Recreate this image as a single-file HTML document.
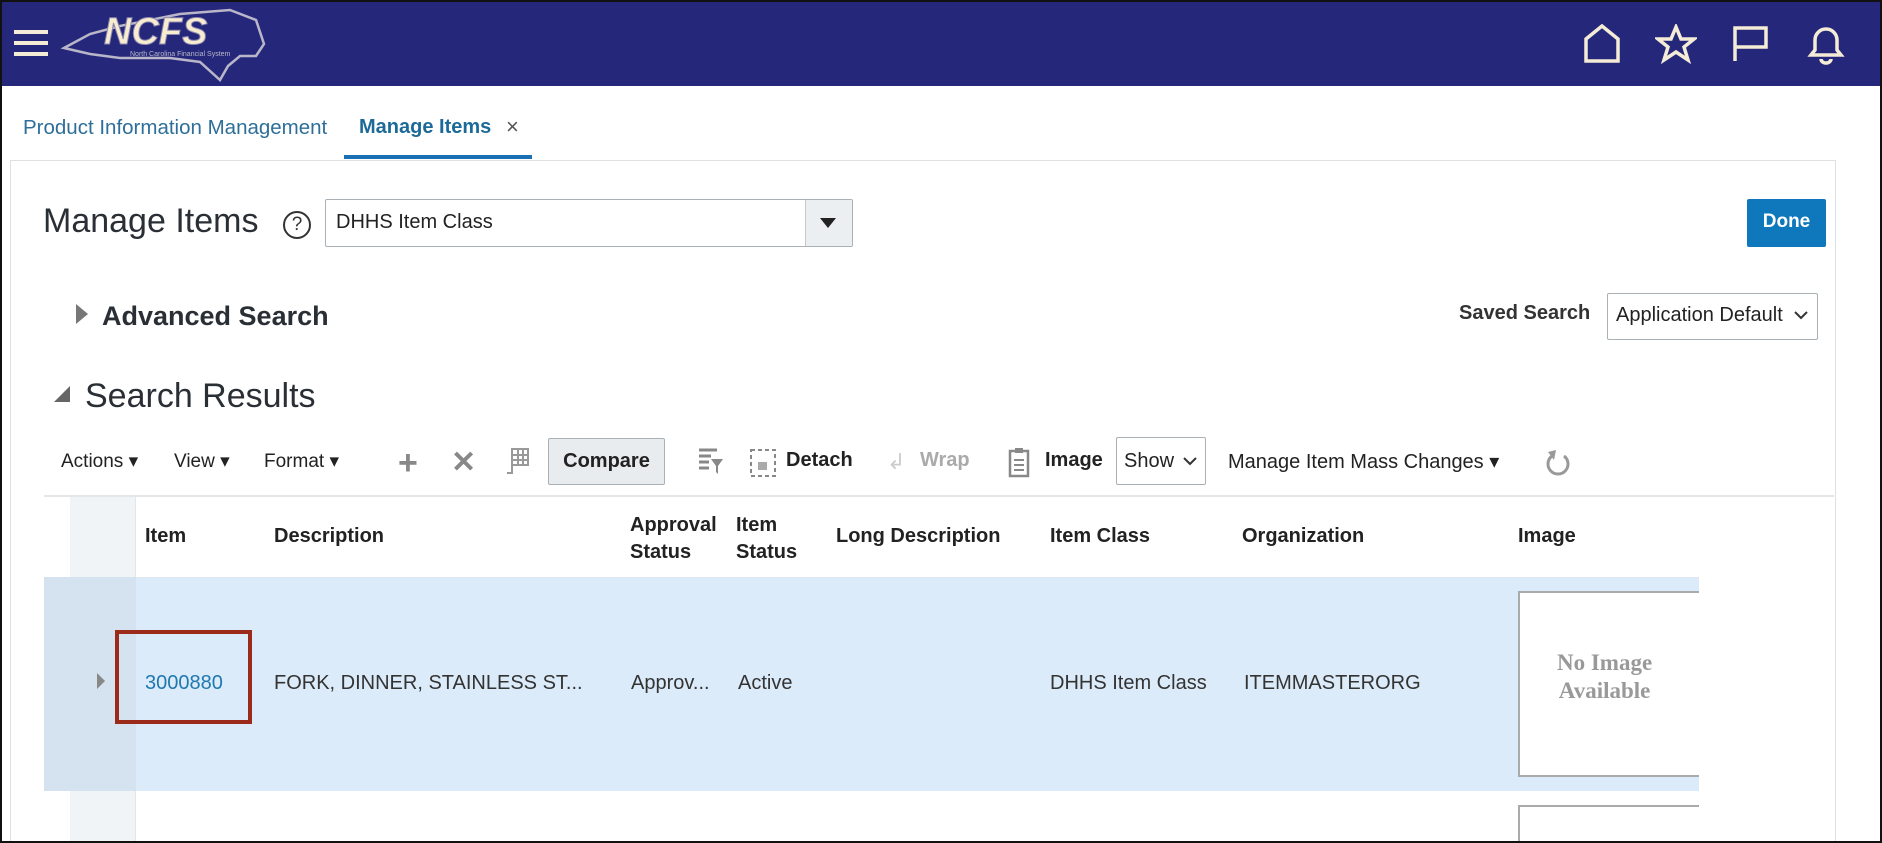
<!DOCTYPE html>
<html style="width:1882px;height:843px;overflow:hidden"><head><meta charset="utf-8"><style>
*{box-sizing:border-box;margin:0;padding:0}
body{width:1882px;height:843px;overflow:hidden;background:#fff;font-family:"Liberation Sans",Arial,sans-serif;position:relative;color:#333}
.a{position:absolute;white-space:nowrap}
#frame{position:absolute;left:0;top:0;width:1882px;height:843px;border:2px solid #111;z-index:50;pointer-events:none}
#hdr{position:absolute;left:0;top:0;width:1882px;height:86px;background:#25287a}
.ic{stroke:#f5ecd8;fill:none;stroke-width:3.5}
.th{font-weight:bold;font-size:20px;color:#222}
.td{font-size:20px;color:#333}
.tb{font-size:19px;color:#222}
</style></head><body>
<div id="frame"></div>
<div id="hdr">
 <div class="a" style="left:14px;top:30px;width:34px;height:4px;background:#f5ecd8"></div>
 <div class="a" style="left:14px;top:41px;width:34px;height:4px;background:#f5ecd8"></div>
 <div class="a" style="left:14px;top:52px;width:34px;height:4px;background:#f5ecd8"></div>
 <svg class="a" style="left:60px;top:4px" width="210" height="80" viewBox="0 0 210 80">
  <path d="M4 44 L30 30 L60 22 L120 10 L170 6 L196 16 L204 40 L196 52 L180 52 L168 62 L160 76 L140 58 L110 54 L60 54 L30 50 Z" fill="none" stroke="#b9b6c9" stroke-width="2.5"/>
  <text x="44" y="40" font-family="Liberation Sans" font-weight="bold" font-style="italic" font-size="38" fill="#f7ecd0" stroke="#8e8ab0" stroke-width="1">NCFS</text>
  <text x="70" y="52" font-family="Liberation Sans" font-size="7" fill="#b9b6c9">North Carolina Financial System</text>
 </svg>
 <svg class="a" style="left:1583px;top:24px" width="40" height="40"><path class="ic" d="M3 37 V15 L19 2 L35 15 V37 Z"/></svg>
 <svg class="a" style="left:1655px;top:24px" width="42" height="40"><path class="ic" d="M21 3 L26 15 L39 15 L29 23 L33 36 L21 28 L9 36 L13 23 L3 15 L16 15 Z"/></svg>
 <svg class="a" style="left:1732px;top:25px" width="40" height="40"><path class="ic" d="M3 36 V3 H34 V22 H3"/></svg>
 <svg class="a" style="left:1806px;top:24px" width="40" height="42"><path class="ic" d="M5 31 H35 L31 26 V16 A11 11 0 0 0 9 16 V26 Z M15 35 A5 4 0 0 0 25 35"/></svg>
</div>
<div class="a" style="left:23px;top:116px;font-size:20.5px;color:#2d6f99">Product Information Management</div>
<div class="a" style="left:359px;top:116px;font-size:20px;font-weight:bold;color:#1d6a99">Manage Items</div>
<div class="a" style="left:506px;top:114px;font-size:22px;color:#555">×</div>
<div class="a" style="left:344px;top:155px;width:188px;height:4px;background:#1b6fb3"></div>
<div class="a" style="left:10px;top:160px;width:1826px;height:683px;border:1px solid #dde1e4;border-bottom:none"></div>
<div class="a" style="left:43px;top:202px;font-size:34px;color:#2a2f36">Manage Items</div>
<div class="a" style="left:283px;top:211px;width:28px;height:28px;border:2px solid #333;border-radius:50%;text-align:center;font-size:19px;line-height:24px;color:#333">?</div>
<div class="a" style="left:325px;top:199px;width:528px;height:48px;border:1px solid #a9b0b6;border-radius:2px"></div>
<div class="a" style="left:336px;top:211px;font-size:20px;color:#222">DHHS Item Class</div>
<div class="a" style="left:805px;top:200px;width:47px;height:46px;background:#eceff1;border-left:1px solid #c5cacd"></div>
<div class="a" style="left:820px;top:218px;width:0;height:0;border-left:8px solid transparent;border-right:8px solid transparent;border-top:10px solid #222"></div>
<div class="a" style="left:1747px;top:199px;width:79px;height:48px;background:#0f78bc;border-radius:2px;color:#fff;font-weight:bold;font-size:19px;text-align:center;line-height:46px">Done</div>
<div class="a" style="left:76px;top:304px;width:0;height:0;border-top:10px solid transparent;border-bottom:10px solid transparent;border-left:12px solid #777"></div>
<div class="a" style="left:102px;top:301px;font-size:27px;font-weight:bold;color:#2a2f36">Advanced Search</div>
<div class="a" style="left:1459px;top:302px;font-size:20px;font-weight:bold;color:#333">Saved Search</div>
<div class="a" style="left:1607px;top:293px;width:211px;height:47px;border:1px solid #a9b0b6;border-radius:2px"></div>
<div class="a" style="left:1616px;top:304px;font-size:20px;color:#222">Application Default</div>
<svg class="a" style="left:1794px;top:310px" width="14" height="10"><path d="M1 2 L7 8 L13 2" stroke="#333" stroke-width="2" fill="none"/></svg>
<div class="a" style="left:54px;top:386px;width:0;height:0;border-left:16px solid transparent;border-bottom:16px solid #666"></div>
<div class="a" style="left:85px;top:377px;font-size:34px;color:#2a2f36">Search Results</div>
<div class="a tb" style="left:61px;top:450px">Actions ▾</div>
<div class="a tb" style="left:174px;top:450px">View ▾</div>
<div class="a tb" style="left:264px;top:450px">Format ▾</div>
<div class="a" style="left:398px;top:444px;font-size:34px;font-weight:bold;color:#888">+</div>
<div class="a" style="left:451px;top:445px;font-size:30px;font-weight:bold;color:#888">✕</div>
<svg class="a" style="left:504px;top:447px" width="26" height="30"><rect x="8" y="2" width="16" height="16" fill="none" stroke="#999" stroke-width="2"/><path d="M8 8 H24 M8 13 H24 M14 2 V18 M19 2 V18 M8 18 V26 H3" stroke="#999" stroke-width="2" fill="none"/></svg>
<div class="a" style="left:548px;top:438px;width:117px;height:47px;background:#e9ecee;border:1px solid #a9b0b6;border-radius:2px;font-weight:bold;font-size:20px;text-align:center;line-height:45px;color:#222">Compare</div>
<svg class="a" style="left:697px;top:447px" width="28" height="30"><path d="M2 3 H20 M2 9 H14 M2 15 H12 M2 21 H12" stroke="#888" stroke-width="3"/><path d="M14 12 H26 L21 19 V27 L19 25 V19 Z" fill="#888"/></svg>
<svg class="a" style="left:749px;top:448px" width="28" height="30"><rect x="2" y="2" width="24" height="26" fill="none" stroke="#888" stroke-width="2" stroke-dasharray="4 3"/><rect x="9" y="14" width="9" height="8" fill="#aaa"/></svg>
<div class="a tb" style="left:786px;top:449px;font-weight:bold;font-size:20px">Detach</div>
<div class="a" style="left:887px;top:449px;font-size:22px;color:#ccc">↲</div>
<div class="a tb" style="left:920px;top:449px;color:#aaa;font-weight:bold;font-size:20px">Wrap</div>
<svg class="a" style="left:1007px;top:446px" width="24" height="32"><rect x="3" y="5" width="18" height="25" fill="none" stroke="#888" stroke-width="2.5"/><rect x="8" y="2" width="8" height="5" fill="#888"/><path d="M7 14 H17 M7 19 H17 M7 24 H17" stroke="#888" stroke-width="2"/></svg>
<div class="a tb" style="left:1045px;top:449px;font-weight:bold;font-size:20px">Image</div>
<div class="a" style="left:1116px;top:437px;width:90px;height:48px;border:1px solid #a9b0b6;border-radius:2px"></div>
<div class="a tb" style="left:1124px;top:450px;font-size:20px">Show</div>
<svg class="a" style="left:1183px;top:456px" width="14" height="10"><path d="M1 2 L7 8 L13 2" stroke="#333" stroke-width="2" fill="none"/></svg>
<div class="a tb" style="left:1228px;top:449px;font-size:20px">Manage Item Mass Changes ▾</div>
<svg class="a" style="left:1544px;top:448px" width="28" height="30"><path d="M8 8 A10 10 0 1 0 20 8" stroke="#999" stroke-width="3" fill="none"/><path d="M4 4 L12 2 L10 12 Z" fill="#999"/></svg>
<div class="a" style="left:44px;top:495px;width:1790px;height:2px;background:#e4e7ea"></div>
<div class="a" style="left:70px;top:497px;width:66px;height:346px;background:#f1f4f6;border-right:1px solid #e3e7ea"></div>
<div class="a th" style="left:145px;top:525px">Item</div>
<div class="a th" style="left:274px;top:525px">Description</div>
<div class="a th" style="left:630px;top:512px;line-height:27px">Approval<br>Status</div>
<div class="a th" style="left:736px;top:512px;line-height:27px">Item<br>Status</div>
<div class="a th" style="left:836px;top:525px">Long Description</div>
<div class="a th" style="left:1050px;top:525px">Item Class</div>
<div class="a th" style="left:1242px;top:525px">Organization</div>
<div class="a th" style="left:1518px;top:525px">Image</div>
<div class="a" style="left:44px;top:577px;width:1655px;height:214px;background:#dbebf9;border-top:1px solid #e0e8ee"></div>
<div class="a" style="left:44px;top:577px;width:92px;height:214px;background:#d4e3ef"></div>
<div class="a" style="left:97px;top:673px;width:0;height:0;border-top:8px solid transparent;border-bottom:8px solid transparent;border-left:8px solid #888"></div>
<div class="a" style="left:115px;top:630px;width:137px;height:94px;border:4px solid #9b2a1a"></div>
<div class="a td" style="left:145px;top:672px;color:#1f78b0">3000880</div>
<div class="a td" style="left:274px;top:672px">FORK, DINNER, STAINLESS ST...</div>
<div class="a td" style="left:631px;top:672px">Approv...</div>
<div class="a td" style="left:738px;top:672px">Active</div>
<div class="a td" style="left:1050px;top:672px">DHHS Item Class</div>
<div class="a td" style="left:1244px;top:672px">ITEMMASTERORG</div>
<div class="a" style="left:1518px;top:591px;width:181px;height:186px;background:#fff;border:2px solid #aaa;border-right:none"></div>
<div class="a" style="left:1557px;top:649px;font-family:'Liberation Serif',serif;font-size:23px;font-weight:bold;color:#999;text-align:center;line-height:28px">No Image<br>Available</div>
<div class="a" style="left:1518px;top:805px;width:181px;height:38px;background:#fff;border:2px solid #aaa;border-right:none;border-bottom:none"></div>
</body></html>
